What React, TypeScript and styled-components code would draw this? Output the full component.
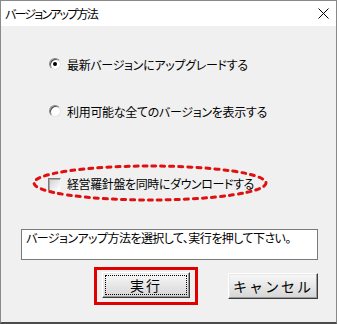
import React from 'react';
import styled, { createGlobalStyle } from 'styled-components';

const GlobalStyle = createGlobalStyle`
  html, body {
    margin: 0;
    padding: 0;
    background: #ffffff;
  }
  body {
    font-family: "Noto Sans CJK JP", "Noto Sans", sans-serif;
    color: #000;
  }
`;

const Window = styled.div`
  box-sizing: border-box;
  width: 337px;
  height: 324px;
  display: flex;
  flex-direction: column;
  border: 1px solid #8a8a8a;
  border-bottom: 2px solid #4a4a4a;
`;

const TitleBar = styled.div`
  height: 25px;
  flex: none;
  display: flex;
  align-items: center;
  justify-content: space-between;
  padding: 0 7px 0 4px;
  background: #ffffff;
  font-size: 12px;
  letter-spacing: -1.8px;
  font-feature-settings: 'palt';
`;

const Body = styled.div`
  flex: 1;
  display: flex;
  flex-direction: column;
  padding: 0 18px 0 20px;
  background: #f0f0f0;
  font-size: 12px;
`;

const OptionList = styled.div`
  display: flex;
  flex-direction: column;
  gap: 31px;
  margin: 30px 0 0 28px;
`;

const Row = styled.label<{ $tight?: number }>`
  display: flex;
  align-items: center;
  gap: 6px;
  height: 16px;
  font-feature-settings: 'palt';
  letter-spacing: ${p => p.$tight ?? -0.3}px;
`;

const Radio = styled.span<{ $checked?: boolean }>`
  box-sizing: border-box;
  position: relative;
  flex: none;
  width: 12px;
  height: 12px;
  border-radius: 50%;
  background: #fff;
  border: 1px solid;
  border-color: #8a8a8a #e4e4e4 #e4e4e4 #8a8a8a;
  box-shadow: inset 1px 1px 0 #505050;
  &::after {
    content: '';
    display: ${p => (p.$checked ? 'block' : 'none')};
    position: absolute;
    left: 3px;
    top: 3px;
    width: 4px;
    height: 4px;
    border-radius: 50%;
    background: #000;
  }
`;

const Highlight = styled.div`
  position: relative;
  display: flex;
  align-items: center;
  width: 236px;
  height: 38px;
  margin: 45px 0 0 11px;
  padding-left: 16px;
  box-sizing: border-box;
`;

const Ring = styled.svg`
  position: absolute;
  left: 0;
  top: 0;
  pointer-events: none;
`;

const Check = styled.span`
  box-sizing: border-box;
  flex: none;
  width: 13px;
  height: 13px;
  margin-top: 2px;
  border: 1px solid;
  border-color: #7a7a7a #f4f4f4 #f4f4f4 #7a7a7a;
  background: linear-gradient(135deg, #cfcfcf, #ffffff);
  box-shadow: inset 1px 1px 0 #a8a8a8;
`;

const Message = styled.div`
  box-sizing: border-box;
  height: 31px;
  margin-top: 27px;
  padding: 1px 4px;
  background: #fff;
  border: 1px solid #7a7a7a;
  line-height: 14px;
  letter-spacing: -0.55px;
  font-feature-settings: 'palt';
`;

const Buttons = styled.div`
  display: flex;
  justify-content: flex-end;
  align-items: center;
  gap: 30px;
  margin-top: 7px;
`;

const Focus = styled.div`
  border: 3px solid #e00000;
  padding: 2px 5px 4px 5px;
`;

const Button = styled.button<{ $focused?: boolean; $wide?: number }>`
  box-sizing: border-box;
  width: ${p => p.$wide ?? 88}px;
  height: 26px;
  padding: 0;
  font-family: "Noto Sans CJK JP", "Noto Sans", sans-serif;
  font-size: 14px;
  letter-spacing: 2px;
  color: #000;
  background: linear-gradient(#f8f8f8, #d6d6d6);
  border: 1px solid;
  border-color: #ffffff #3c3c3c #3c3c3c #ffffff;
  box-shadow: inset -1px -1px 0 #9a9a9a, inset 1px 1px 0 #e8e8e8;
  outline: ${p => (p.$focused ? '1px dotted #000' : 'none')};
  outline-offset: -4px;
`;

export default function App() {
  return (
    <>
      <GlobalStyle />
      <Window>
        <TitleBar>
          <span>バージョンアップ方法</span>
          <svg width="11" height="11" viewBox="0 0 11 11">
            <path d="M0.5 0.5 L10.5 10.5 M10.5 0.5 L0.5 10.5" stroke="#000" strokeWidth="1" />
          </svg>
        </TitleBar>
        <Body>
          <OptionList>
            <Row>
              <Radio $checked />
              最新バージョンにアップグレードする
            </Row>
            <Row>
              <Radio />
              利用可能な全てのバージョンを表示する
            </Row>
          </OptionList>
          <Highlight>
            <Ring width="236" height="38" viewBox="0 0 236 38">
              <ellipse
                cx="118"
                cy="19"
                rx="116"
                ry="17"
                fill="none"
                stroke="#e01010"
                strokeWidth="3"
                strokeDasharray="4 5"
                strokeLinecap="round"
              />
            </Ring>
            <Row $tight={-0.4}>
              <Check />
              経営羅針盤を同時にダウンロードする
            </Row>
          </Highlight>
          <Message>バージョンアップ方法を選択して、実行を押して下さい。</Message>
          <Buttons>
            <Focus>
              <Button $focused>実行</Button>
            </Focus>
            <Button $wide={90}>キャンセル</Button>
          </Buttons>
        </Body>
      </Window>
    </>
  );
}
